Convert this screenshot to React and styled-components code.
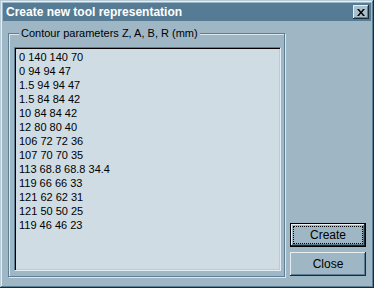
import React from "react";
import styled, { createGlobalStyle } from "styled-components";

const GlobalStyle = createGlobalStyle`
	html, body {
		margin: 0;
		padding: 0;
		background: #9fb7c5;
	}
	* {
		box-sizing: border-box;
	}
`;

const rows = [
	"0 140 140 70",
	"0 94 94 47",
	"1.5 94 94 47",
	"1.5 84 84 42",
	"10 84 84 42",
	"12 80 80 40",
	"106 72 72 36",
	"107 70 70 35",
	"113 68.8 68.8 34.4",
	"119 66 66 33",
	"121 62 62 31",
	"121 50 50 25",
	"119 46 46 23",
];

const App = () => {
	return (
		<>
			<GlobalStyle />
			<Window>
				<TitleBar>
					<Title>Create new tool representation</Title>
					<CloseBox>
						<svg width="8" height="7" viewBox="0 0 8 7">
							<path d="M0 0h2l2 2.5L6 0h2L5 3.5 8 7H6L4 4.5 2 7H0l3-3.5z" fill="#000" />
						</svg>
					</CloseBox>
				</TitleBar>
				<Body>
					<Group>
						<Legend>Contour parameters Z, A, B, R (mm)</Legend>
						<ListBox>
							{rows.map((row, index) => (
								<Line key={index}>{row}</Line>
							))}
						</ListBox>
					</Group>
					<Buttons>
						<Button $default>
							<Focus>Create</Focus>
						</Button>
						<Button>Close</Button>
					</Buttons>
				</Body>
			</Window>
		</>
	);
};

const Window = styled.div`
	width: 374px;
	height: 288px;
	padding: 3px;
	display: flex;
	flex-direction: column;
	background: #9fb7c5;
	font-family: "Liberation Sans", Arial, sans-serif;
	font-size: 11px;
	color: #000;
	box-shadow: inset -1px -1px 0 #1c2c36, inset 1px 1px 0 #b8ccd8,
		inset -2px -2px 0 #5d7f94, inset 2px 2px 0 #e4eef3;
`;

const TitleBar = styled.div`
	height: 18px;
	display: flex;
	align-items: center;
	justify-content: space-between;
	padding: 0 2px 0 3px;
	background: #567c95;
`;

const Title = styled.div`
	color: #fff;
	font-weight: bold;
	font-size: 12px;
`;

const CloseBox = styled.div`
	width: 16px;
	height: 14px;
	display: flex;
	align-items: center;
	justify-content: center;
	background: #a9bfcc;
	box-shadow: inset -1px -1px 0 #1c2c36, inset 1px 1px 0 #e4eef3,
		inset -2px -2px 0 #5d7f94;
`;

const Body = styled.div`
	flex: 1;
	display: flex;
	align-items: flex-end;
	gap: 5px;
	padding: 6px 5px 8px 5px;
`;

const Group = styled.fieldset`
	margin: 0;
	width: 277px;
	height: 100%;
	padding: 7px 3px 5px 5px;
	border: 1px solid #5d7f94;
	box-shadow: 1px 1px 0 #dce8ee, inset 1px 1px 0 #dce8ee;
	display: flex;
	min-width: 0;
`;

const Legend = styled.legend`
	padding: 0 2px;
	margin-left: 5px;
	line-height: 13px;
	background: #9fb7c5;
`;

const ListBox = styled.div`
	flex: 1;
	background: #cfdce4;
	border-top: 1px solid #5d7f94;
	border-left: 1px solid #5d7f94;
	border-right: 1px solid #e4eef3;
	border-bottom: 1px solid #e4eef3;
	box-shadow: inset 1px 1px 0 #000, inset -1px -1px 0 #b8ccd8;
	padding: 2px 2px 1px 4px;
`;

const Line = styled.div`
	line-height: 14px;
	white-space: nowrap;
`;

const Buttons = styled.div`
	width: 76px;
	display: flex;
	flex-direction: column;
	gap: 5px;
	margin-bottom: 1px;
`;

const Button = styled.div`
	height: 24px;
	display: flex;
	align-items: center;
	justify-content: center;
	background: #9fb7c5;
	font-size: 12px;
	padding: ${(p) => (p.$default ? "2px" : "4px")};
	border: ${(p) => (p.$default ? "1px solid #000" : "none")};
	box-shadow: inset -1px -1px 0 #1c2c36, inset 1px 1px 0 #e4eef3,
		inset -2px -2px 0 #5d7f94;
`;

const Focus = styled.div`
	flex: 1;
	align-self: stretch;
	display: flex;
	align-items: center;
	justify-content: center;
	border: 1px dotted #000;
`;

export default App;
